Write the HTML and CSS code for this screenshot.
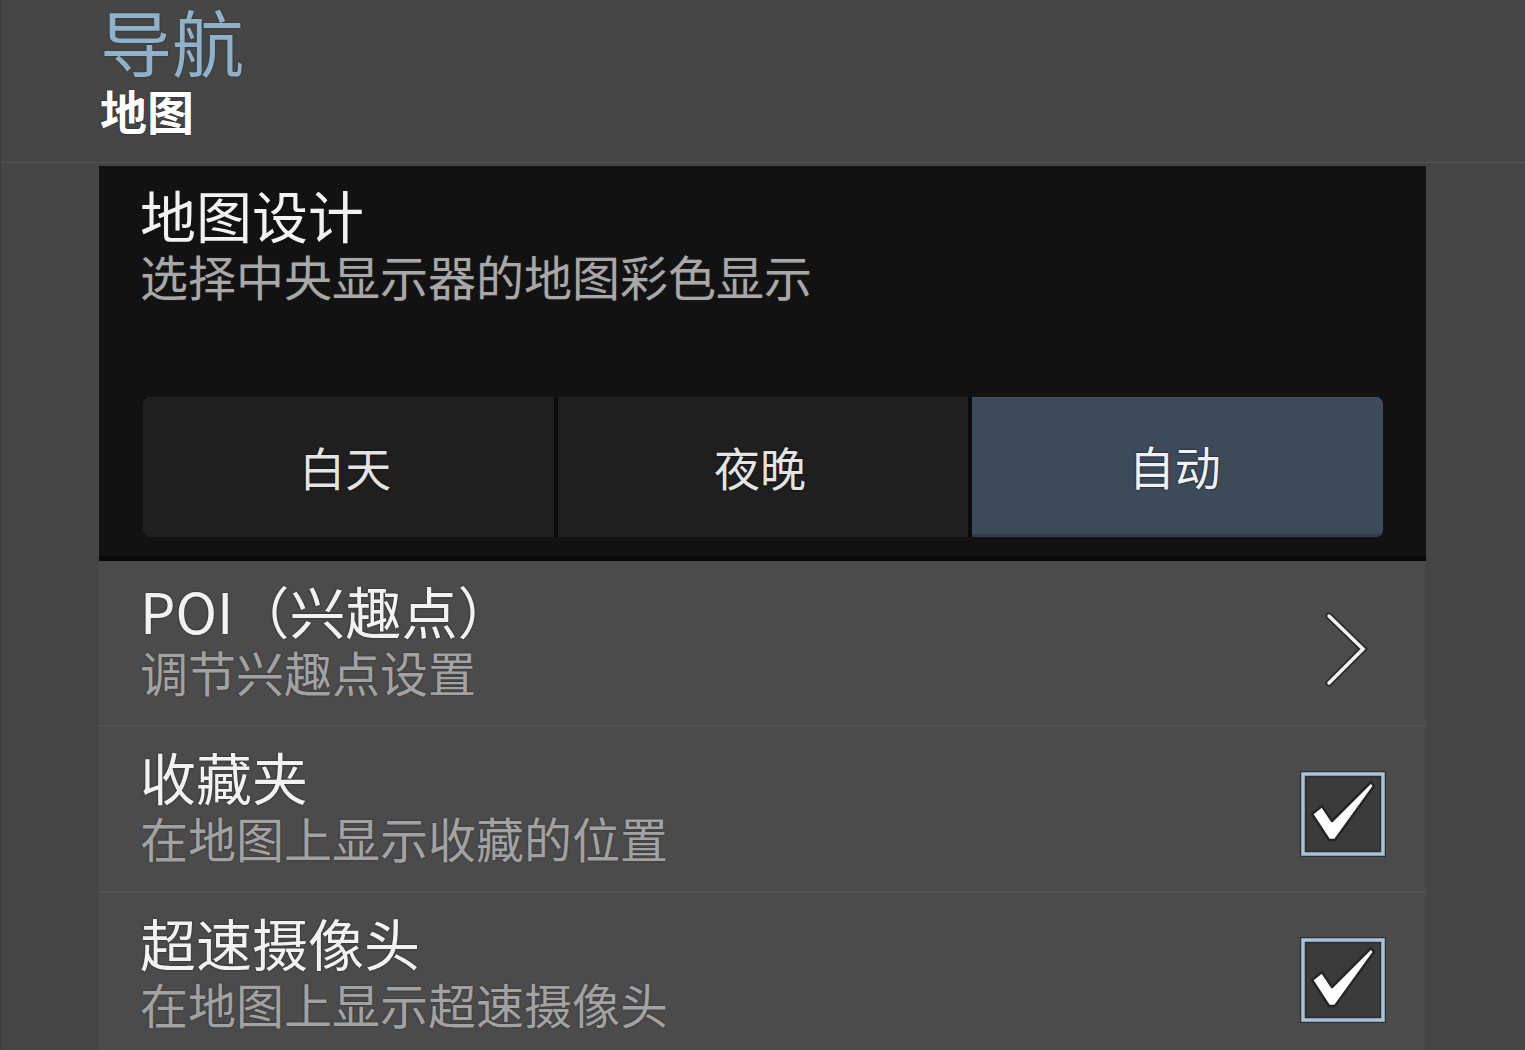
FILE: index.html
```html
<!DOCTYPE html>
<html lang="zh-CN">
<head>
<meta charset="utf-8">
<title>导航 - 地图</title>
<link rel="stylesheet" href="styles.css">
</head>
<body>
<div class="screen">
  <header class="header">
    <div class="h-title">导航</div>
    <div class="h-sub">地图</div>
  </header>
  <main class="main">
    <section class="panel">
      <div class="item-title">地图设计</div>
      <div class="item-sub dark-sub">选择中央显示器的地图彩色显示</div>
      <div class="segments">
        <div class="seg">白天</div>
        <div class="seg">夜晚</div>
        <div class="seg active">自动</div>
      </div>
    </section>
    <section class="list">
      <div class="row">
        <div class="texts">
          <div class="item-title">POI（兴趣点）</div>
          <div class="item-sub">调节兴趣点设置</div>
        </div>
        <svg class="chevron" width="48" height="80" viewBox="0 0 48 80">
          <polyline points="7,4 41,37 7,71" fill="none" stroke="#2a2a2a" stroke-width="7" stroke-linecap="round" stroke-linejoin="miter"/>
          <polyline points="7,4 41,37 7,71" fill="none" stroke="#f4f4f4" stroke-width="3.5" stroke-linecap="round" stroke-linejoin="miter"/>
        </svg>
      </div>
      <div class="row">
        <div class="texts">
          <div class="item-title">收藏夹</div>
          <div class="item-sub">在地图上显示收藏的位置</div>
        </div>
        <svg class="check" width="86" height="86" viewBox="0 0 86 86">
          <rect x="3" y="3" width="80" height="80" fill="#3c3b3b" stroke="#2f2f2f" stroke-width="7"/>
          <rect x="3" y="3" width="80" height="80" fill="none" stroke="#a9c4da" stroke-width="3.5"/>
          <polygon points="12,43 22,35 32,50 71,11 74,15 35,69 29,69" fill="#ffffff" stroke="#262626" stroke-width="2.5" stroke-linejoin="round"/>
        </svg>
      </div>
      <div class="row">
        <div class="texts">
          <div class="item-title">超速摄像头</div>
          <div class="item-sub">在地图上显示超速摄像头</div>
        </div>
        <svg class="check" width="86" height="86" viewBox="0 0 86 86">
          <rect x="3" y="3" width="80" height="80" fill="#3c3b3b" stroke="#2f2f2f" stroke-width="7"/>
          <rect x="3" y="3" width="80" height="80" fill="none" stroke="#a9c4da" stroke-width="3.5"/>
          <polygon points="12,43 22,35 32,50 71,11 74,15 35,69 29,69" fill="#ffffff" stroke="#262626" stroke-width="2.5" stroke-linejoin="round"/>
        </svg>
      </div>
    </section>
  </main>
</div>
</body>
</html>
```

FILE: styles.css
```css
html, body {
  margin: 0;
  padding: 0;
  background: #464646;
  font-family: "Noto Sans CJK SC", "Noto Sans", sans-serif;
  overflow: hidden;
}

.screen {
  width: 1525px;
  height: 1050px;
  overflow: hidden;
  background: #454545;
  border-left: 1px solid #3c3c3c;
  box-sizing: border-box;
  display: flex;
  flex-direction: column;
}

.header {
  height: 163px;
  box-sizing: border-box;
  padding: 0 0 0 99px;
  border-bottom: 1px solid #555555;
  background: #464646;
  flex: none;
}

.h-title {
  font-size: 72px;
  line-height: 1.1;
  color: #8fb2ca;
  font-weight: 400;
  text-shadow: 0 0 2px #2a2a2a;
}

.h-sub {
  margin-top: 3px;
  font-size: 47px;
  line-height: 1.2;
  font-weight: 700;
  color: #ffffff;
  text-shadow: 0 0 2px #222;
}

.main {
  margin: 3px 0 0 98px;
  width: 1327px;
  display: flex;
  flex-direction: column;
  flex: none;
}

.panel {
  background: #121212;
  height: 395px;
  box-sizing: border-box;
  padding: 14px 43px 0 44px;
  border-bottom: 5px solid #080808;
}

.panel .item-title,
.panel .item-sub {
  margin-left: -3px;
}

.item-title {
  font-size: 56px;
  line-height: 1.2;
  color: #f2f2f2;
  text-shadow: 0 0 2px #1a1a1a;
  white-space: nowrap;
}

.item-sub {
  font-size: 48px;
  line-height: 1.2;
  color: #a2a2a2;
  text-shadow: 0 0 2px #2a2a2a;
  white-space: nowrap;
}

.dark-sub {
  color: #a8a8a8;
}

.segments {
  margin-top: 92px;
  height: 140px;
  display: flex;
  gap: 4px;
  border-radius: 7px;
  overflow: hidden;
  background: #0c0c0c;
}

.seg {
  flex: 1;
  display: flex;
  align-items: center;
  justify-content: center;
  background: #1f1f1f;
  border-top: 1px solid #262626;
  font-size: 46px;
  color: #e4e4e4;
  text-shadow: 0 0 2px #000;
  padding-bottom: 2px;
  padding-right: 6px;
}

.seg.active {
  background: #3d4a5a;
  border-top-color: #44505f;
  border-bottom: 3px solid #303b48;
  color: #eef2f6;
}

.list {
  background: #4b4b4b;
  flex: none;
}

.row {
  height: 166px;
  box-sizing: border-box;
  padding: 15px 40px 0 41px;
  display: flex;
  justify-content: space-between;
  align-items: flex-start;
  border-bottom: 2px solid #525252;
}

.row:last-child {
  border-bottom: none;
}

.texts {
  display: flex;
  flex-direction: column;
}

.chevron {
  margin-top: 36px;
  margin-right: 16px;
  flex: none;
}

.check {
  margin-top: 29px;
  margin-right: 0;
  flex: none;
}
```
